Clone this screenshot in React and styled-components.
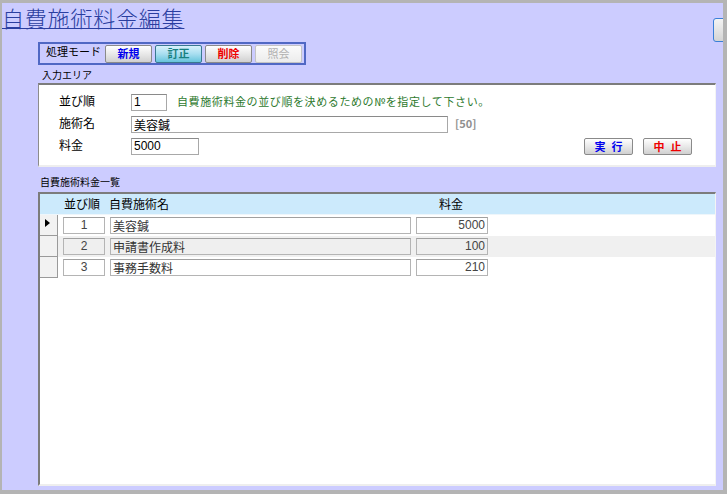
import React from 'react'
import styled, { createGlobalStyle, css } from 'styled-components'

const Global = createGlobalStyle`
  html, body { margin: 0; padding: 0; }
  body {
    font-family: "Noto Sans CJK JP", "Liberation Sans", sans-serif;
    font-size: 12px;
    color: #000;
  }
`

const Frame = styled.div`
  position: relative;
  box-sizing: border-box;
  width: 727px;
  height: 494px;
  overflow: hidden;
  background: #ccccff;
  border-style: solid;
  border-color: #b4b4b4;
  border-width: 3px 4px 4px 2px;
`

const Title = styled.h1`
  margin: 0;
  padding: 1px 0 0 0;
  height: 33px;
  box-sizing: border-box;
  font-size: 22px;
  line-height: 26px;
  font-weight: 300;
  letter-spacing: 0.8px;
  color: #2a3ea0;
  text-decoration: underline;
  text-decoration-thickness: 1px;
  text-underline-offset: 1px;
`

const EdgeButton = styled.div`
  position: absolute;
  top: 15px;
  right: -8px;
  width: 18px;
  height: 24px;
  box-sizing: border-box;
  border: 1px solid #3a7fd8;
  border-radius: 3px;
  background: linear-gradient(#f4f4f4, #d4d4d4);
`

const Content = styled.div`
  margin-left: 36px;
  width: 678px;
`

const ModeBox = styled.div`
  margin-top: 6px;
  width: 268px;
  height: 23px;
  box-sizing: border-box;
  border: 2px solid #5068c4;
  display: flex;
  align-items: center;
  padding-left: 6px;
  gap: 3px;
`

const ModeLabel = styled.span`
  font-size: 11px;
  width: 56px;
  margin-top: -5px;
`

const btnBase = css`
  box-sizing: border-box;
  height: 18px;
  border: 1px solid #8a8a8a;
  border-radius: 2px;
  background: linear-gradient(#ffffff, #e6e6e6 55%, #d0d0d0);
  font-family: "Noto Sans CJK JP", sans-serif;
  font-size: 11px;
  font-weight: 700;
  line-height: 15px;
  padding: 0;
  text-align: center;
`

const ModeButton = styled.div`
  ${btnBase}
  width: 47px;
  color: ${p => p.$color || '#0000ee'};
  ${p => p.$active && css`
    background: linear-gradient(#d8f2fb, #a8def0 50%, #66c4dc);
    border-color: #3a7890;
  `}
  ${p => p.$disabled && css`
    border-color: #c4c4c4;
    background: linear-gradient(#fbfbfb, #ececec);
    font-weight: 400;
  `}
`

const SectionLabel = styled.div`
  font-size: 10px;
  line-height: 12px;
  padding-left: ${p => p.$indent || 4}px;
  margin-top: ${p => p.$top || 0}px;
  height: ${p => p.$h || 13}px;
`

const InputPanel = styled.div`
  box-sizing: border-box;
  height: 84px;
  background: #fff;
  border-top: 2px solid #7c7c7c;
  border-left: 1px solid #8c8c8c;
  border-right: 1px solid #f4f4f4;
  border-bottom: 2px solid #eeeeee;
  padding: 6px 0 0 20px;
  display: flex;
  flex-direction: column;
`

const FieldRow = styled.div`
  display: flex;
  align-items: center;
  height: 22px;
`

const FieldLabel = styled.span`
  width: 72px;
  font-size: 12px;
  margin-top: -3px;
`

const TextBox = styled.div`
  box-sizing: border-box;
  width: ${p => p.$w}px;
  height: 17px;
  border: 1px solid #a8a8a8;
  border-top-color: #8a8a8a;
  background: #fff;
  font-size: 12px;
  line-height: 15px;
  padding-left: 2px;
  font-family: ${p => p.$num ? '"Liberation Sans", sans-serif' : '"Noto Sans CJK JP", sans-serif'};
`

const Hint = styled.span`
  color: #2e7a2e;
  font-size: 11px;
  padding-left: 10px;
  letter-spacing: 0.6px;
  margin-top: -3px;
  white-space: nowrap;
`

const Limit = styled.span`
  color: #909090;
  font-size: 11px;
  padding-left: 7px;
  font-weight: 700;
  margin-top: -3px;
`

const ActionRow = styled.div`
  flex: 1;
  display: flex;
  justify-content: flex-end;
  gap: 10px;
  padding-right: 23px;
`

const ActionButton = styled.div`
  ${btnBase}
  width: 49px;
  height: 17px;
  letter-spacing: 6px;
  padding-left: 6px;
  color: ${p => p.$color};
`

const Grid = styled.div`
  box-sizing: border-box;
  height: 294px;
  background: #fff;
  border-top: 2px solid #7c7c7c;
  border-left: 2px solid #7c7c7c;
  border-right: 1px solid #f4f4f4;
  border-bottom: 2px solid #eeeeee;
`

const HeaderRow = styled.div`
  display: flex;
  align-items: center;
  height: 20px;
  background: #cceafc;
  font-size: 12px;
  border-bottom: 1px solid #eef6fb;
`

const HeadCell = styled.span`
  width: ${p => p.$w}px;
  padding-left: ${p => p.$pl || 0}px;
  box-sizing: border-box;
  margin-top: -2px;
`

const Row = styled.div`
  display: flex;
  align-items: center;
  height: 21px;
  background: ${p => p.$alt ? '#f0f0f0' : '#fff'};
`

const Selector = styled.div`
  box-sizing: border-box;
  width: 18px;
  height: 21px;
  border-right: 1px solid #9a9a9a;
  border-bottom: 1px solid #9a9a9a;
  background: #f2f2f2;
  position: relative;
  margin-right: 5px;
`

const Marker = styled.span`
  position: absolute;
  left: 5px;
  top: 4px;
  width: 0;
  height: 0;
  border-top: 4px solid transparent;
  border-bottom: 4px solid transparent;
  border-left: 5px solid #000;
`

const Cell = styled.div`
  box-sizing: border-box;
  width: ${p => p.$w}px;
  height: 17px;
  margin-right: 5px;
  border: 1px solid #b4b4b4;
  border-top-color: #a0a0a0;
  background: ${p => p.$alt ? '#efefef' : '#fff'};
  font-size: 12px;
  line-height: 15px;
  color: ${p => p.$num ? '#444' : '#333'};
  padding: 0 2px;
  text-align: ${p => p.$align || 'left'};
  font-family: ${p => p.$num ? '"Liberation Sans", sans-serif' : '"Noto Sans CJK JP", sans-serif'};
`

const rows = [
  { no: 1, name: '美容鍼', fee: 5000 },
  { no: 2, name: '申請書作成料', fee: 100 },
  { no: 3, name: '事務手数料', fee: 210 },
]

export default function App() {
  return (
    <>
      <Global />
      <Frame>
        <Title>自費施術料金編集</Title>
        <EdgeButton />
        <Content>
          <ModeBox>
            <ModeLabel>処理モード</ModeLabel>
            <ModeButton>新規</ModeButton>
            <ModeButton $active $color="#178080">訂正</ModeButton>
            <ModeButton $color="#ee0000">削除</ModeButton>
            <ModeButton $disabled $color="#b0b0b0">照会</ModeButton>
          </ModeBox>
          <SectionLabel $top={4} $h={14}>入力エリア</SectionLabel>
          <InputPanel>
            <FieldRow>
              <FieldLabel>並び順</FieldLabel>
              <TextBox $w={36} $num>1</TextBox>
              <Hint>自費施術料金の並び順を決めるための№を指定して下さい。</Hint>
            </FieldRow>
            <FieldRow>
              <FieldLabel>施術名</FieldLabel>
              <TextBox $w={317}>美容鍼</TextBox>
              <Limit>[50]</Limit>
            </FieldRow>
            <FieldRow>
              <FieldLabel>料金</FieldLabel>
              <TextBox $w={68} $num>5000</TextBox>
              <ActionRow>
                <ActionButton $color="#0000ee">実行</ActionButton>
                <ActionButton $color="#ee0000">中止</ActionButton>
              </ActionRow>
            </FieldRow>
          </InputPanel>
          <SectionLabel $top={9} $h={16} $indent={2}>自費施術料金一覧</SectionLabel>
          <Grid>
            <HeaderRow>
              <HeadCell $w={69} $pl={24}>並び順</HeadCell>
              <HeadCell $w={330}>自費施術名</HeadCell>
              <HeadCell $w={60}>料金</HeadCell>
            </HeaderRow>
            {rows.map((r, i) => (
              <Row key={r.no} $alt={i === 1}>
                <Selector>{i === 0 && <Marker />}</Selector>
                <Cell $w={42} $align="center" $num $alt={i === 1}>{r.no}</Cell>
                <Cell $w={301} $alt={i === 1}>{r.name}</Cell>
                <Cell $w={72} $align="right" $num $alt={i === 1}>{r.fee}</Cell>
              </Row>
            ))}
          </Grid>
        </Content>
      </Frame>
    </>
  )
}
